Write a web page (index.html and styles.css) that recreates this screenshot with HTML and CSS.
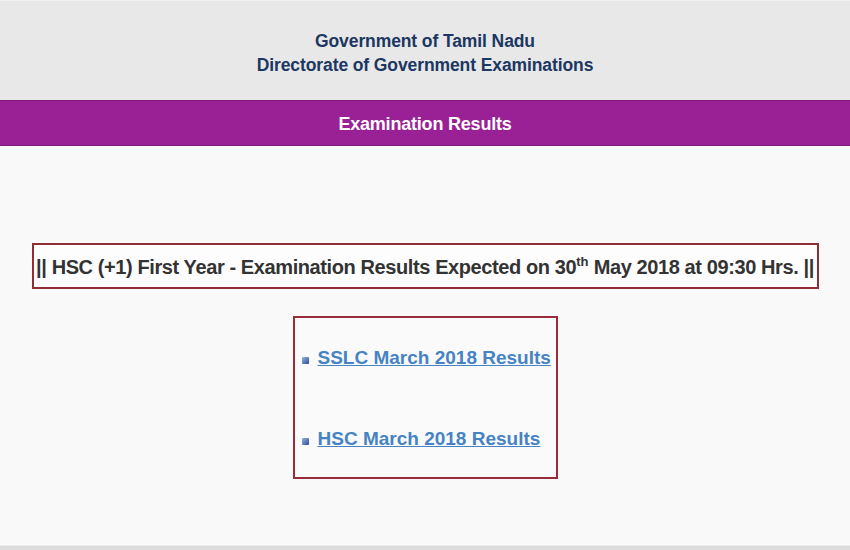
FILE: index.html
```html
<!DOCTYPE html>
<html lang="en">
<head>
  <meta charset="UTF-8">
  <meta name="viewport" content="width=device-width, initial-scale=1.0">
  <title>Examination Results</title>
  <link rel="stylesheet" href="styles.css">
</head>
<body>

  <!-- Header -->
  <div class="header">
    <p>Government of Tamil Nadu</p>
    <p>Directorate of Government Examinations</p>
  </div>

  <!-- Title bar -->
  <div class="titlebar">Examination Results</div>

  <div class="content">
    <!-- Notice -->
    <div class="notice">
      <span>|| HSC (+1) First Year - Examination Results Expected on 30<sup>th</sup> May 2018 at 09:30 Hrs. ||</span>
    </div>

    <!-- Result links -->
    <div class="links">
      <ul>
        <li><a href="#">SSLC March 2018 Results</a></li>
        <li><a href="#">HSC March 2018 Results</a></li>
      </ul>
    </div>
  </div>

  <div class="footer"></div>

</body>
</html>
```

FILE: styles.css
```css
html, body {
  margin: 0;
  padding: 0;
}
body {
  font-family: "Liberation Sans", Arial, sans-serif;
  background-color: #f9f9f9;
  height: 550px;
  overflow: hidden;
  display: flex;
  flex-direction: column;
}
.header {
  background-color: #e8e8e8;
  height: 100px;
  display: flex;
  flex-direction: column;
  justify-content: center;
  align-items: center;
  padding-top: 4px;
  border-top: 1px solid #f3f3f3;
  box-sizing: border-box;
}
.header p {
  margin: 0;
  color: #1b3762;
  font-size: 17.5px;
  font-weight: bold;
  line-height: 24px;
  letter-spacing: -0.1px;
}
.titlebar {
  background-color: #9a2195;
  color: #fff;
  height: 46px;
  line-height: 46px;
  text-align: center;
  font-weight: bold;
  font-size: 18px;
  letter-spacing: -0.2px;
  border-top: 1px solid #7c1a78;
  border-bottom: 1px solid #7c1a78;
  box-sizing: border-box;
}
.content {
  flex: 1;
  display: flex;
  flex-direction: column;
  align-items: center;
  padding-top: 97px;
}
.notice {
  border: 2px solid #8f2f33;
  background-color: #fdfdfd;
  width: 787px;
  height: 46px;
  box-sizing: border-box;
  display: flex;
  align-items: center;
  justify-content: center;
  padding-top: 3px;
  font-size: 20px;
  letter-spacing: -0.4px;
  font-weight: bold;
  color: #333;
  white-space: nowrap;
}
.notice sup {
  font-size: 13px;
  line-height: 0;
  vertical-align: 8px;
  letter-spacing: 0;
}
.links {
  margin-top: 27px;
  width: 265px;
  height: 163px;
  box-sizing: border-box;
  border: 2px solid #9a2b3b;
  background-color: #fbfafb;
}
.links ul {
  margin: 0;
  padding: 24px 0 0 7px;
  list-style: none;
}
.links li {
  display: flex;
  align-items: center;
  height: 32px;
  margin-bottom: 49px;
}
.links li::before {
  content: "";
  width: 7px;
  height: 7px;
  margin-right: 9px;
  background: linear-gradient(135deg, #9db4e0, #2a4c9a);
  border-radius: 1px;
  margin-top: 4px;
}
.links a {
  color: #4683c4;
  font-size: 19px;
  font-weight: bold;
  text-decoration: underline;
}
.footer {
  height: 4px;
  background-color: #dcdcdc;
  border-top: 1px solid #ececec;
}
```
